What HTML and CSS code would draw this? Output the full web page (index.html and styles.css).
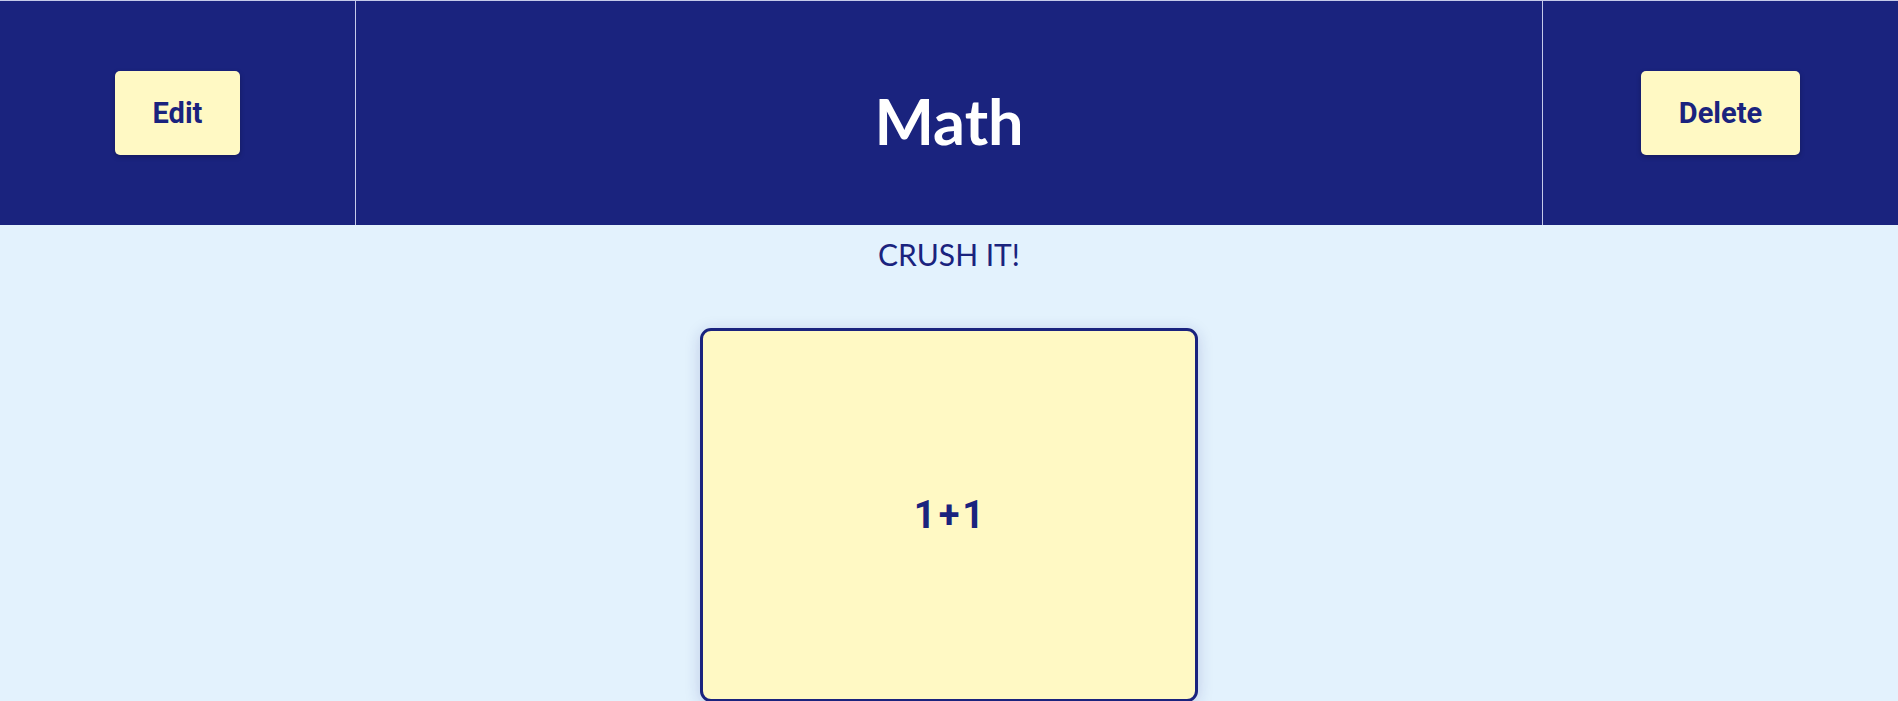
FILE: index.html
```html
<!DOCTYPE html>
<html lang="en">
<head>
<meta charset="utf-8">
<title>Math</title>
<link rel="stylesheet" href="styles.css">
</head>
<body>
<header class="topbar">
  <div class="cell cell-side">
    <button class="btn" type="button">Edit</button>
  </div>
  <div class="cell cell-title">
    <h1 class="title">Math</h1>
  </div>
  <div class="cell cell-side">
    <button class="btn" type="button">Delete</button>
  </div>
</header>
<main class="content">
  <p class="motto">CRUSH IT!</p>
  <div class="card-row">
    <div class="card">
      <span class="card-text">1+1</span>
    </div>
  </div>
</main>
</body>
</html>
```

FILE: styles.css
```css
* {
  box-sizing: border-box;
}

html, body {
  margin: 0;
  padding: 0;
}

body {
  background: #e3f2fd;
  font-family: "Lato", "Noto Sans", sans-serif;
  color: #1a237e;
  overflow: hidden;
}

.topbar {
  display: grid;
  grid-template-columns: 355px 1fr 355px;
  height: 225px;
  background: #1a237e;
  border-top: 1px solid #c5cae9;
}

.cell {
  display: flex;
  align-items: center;
  justify-content: center;
}

.cell-title {
  border-left: 1px solid #c5cae9;
  border-right: 1px solid #c5cae9;
  margin-top: -1px;
  padding-top: 17px;
}

.title {
  margin: 0;
  font-family: "Lato", sans-serif;
  font-weight: 700;
  font-size: 63px;
  line-height: 1.2;
  color: #ffffff;
}

.btn {
  height: 84px;
  padding: 0 38px;
  border: none;
  border-radius: 5px;
  background: #fff9c4;
  color: #1a237e;
  font-family: "Roboto", "Liberation Sans", sans-serif;
  font-weight: 700;
  font-size: 29px;
  box-shadow: 0 2px 5px rgba(0, 0, 0, 0.25);
  cursor: pointer;
}

.content {
  display: flex;
  flex-direction: column;
  align-items: center;
}

.motto {
  margin: 11px 0 0;
  font-family: "Lato", sans-serif;
  font-weight: 400;
  font-size: 30px;
  line-height: 1.2;
}

.card-row {
  display: flex;
  justify-content: center;
  width: 100%;
  margin-top: 56px;
}

.card {
  width: 498px;
  height: 374px;
  display: flex;
  align-items: center;
  justify-content: center;
  background: #fff9c4;
  border: 3px solid #1a237e;
  border-radius: 11px;
  box-shadow: 0 3px 16px rgba(26, 35, 126, 0.18);
}

.card-text {
  padding-left: 3px;
  font-family: "Roboto", "Liberation Sans", sans-serif;
  font-weight: 700;
  font-size: 38px;
  letter-spacing: 3px;
  color: #1a237e;
}
```
